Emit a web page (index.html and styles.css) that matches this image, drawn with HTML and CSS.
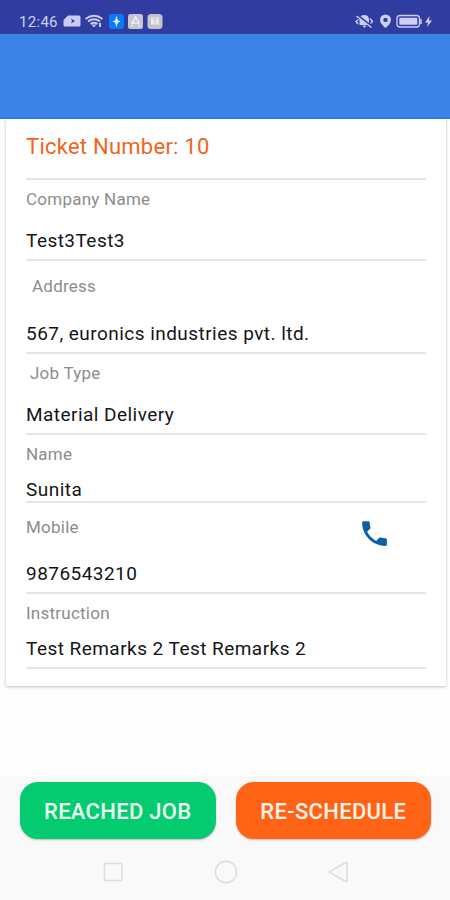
FILE: index.html
```
<!DOCTYPE html>
<html lang="en">
<head>
<meta charset="utf-8">
<title>Ticket details</title>
<link rel="stylesheet" href="styles.css">
</head>
<body>
<header class="status">
  <span class="time">12:46</span>
  <svg class="left-icons" width="104" height="18" viewBox="0 0 104 18">
    <path fill="#c9cdf2" fill-rule="evenodd" d="M5 3.500h11q1.500 0 1.500 1.500v8q0 1.500-1.500 1.500H2Q.5 14.500.5 13V8zM8 6.500l1 2.500-1 2.500 4-2.500z"/>
    <g fill="none" stroke="#c9cdf2" stroke-width="1.800"><path d="M22.500 7Q31 .5 39.500 7M25 9.500q6-4.500 12 0M27.500 12q3.500-2.500 7 0"/></g>
    <path fill="#c9cdf2" d="M28.500 12.500h5L31 15.500zM36 11h2v4h-2z"/>
    <rect x="46" y="2" width="15" height="15" rx="2.500" fill="#087bf5"/>
    <path d="M53.500 4.500v10M50 9.500h7" stroke="#d5edff" stroke-width="1.200"/>
    <path d="M53.500 5.500l2.500 4-2.500 4-2.500-4z" fill="#d5edff"/>
    <rect x="65" y="2" width="15" height="15" rx="2.500" fill="#c4c5d0"/>
    <path d="M69 11l3.500-6 3.500 6zM68 13.500h2M75 13.500h2" fill="none" stroke="#eeeef2" stroke-width="1.600"/>
    <rect x="84.500" y="2" width="15" height="15" rx="3.500" fill="#c4c5cc"/>
    <path d="M88 5.500h8v7h-8z" fill="#e9e9ea"/><path d="M90 7h4M92 7v5" stroke="#c9c9cd"/>
  </svg>
  <svg class="right-icons" width="80" height="18" viewBox="0 0 80 18">
    <path fill="#cdd0f2" d="M4.500 13V8q0-5 4.800-5T14 8v5zM7.500 13.500h4l-2 2.500z"/>
    <path d="M2 3l15 12" stroke="#303c9f" stroke-width="2.500"/><path d="M1.500 4l15 11.500" stroke="#cdd0f2" stroke-width="1.500"/>
    <path d="M3.500 7.500L1 9.500l2 2.500M15 6.500l2.500 3-2 2" fill="none" stroke="#cdd0f2" stroke-width="1.400"/>
    <path fill="#cdd0f2" fill-rule="evenodd" d="M30.500 2.500a5.500 5.500 0 0 1 5.500 5.500q0 3.500-5.500 8-5.500-4.500-5.500-8a5.500 5.500 0 0 1 5.500-5.500zm0 3.200a2.200 2.200 0 1 0 0 4.400 2.200 2.200 0 0 0 0-4.400z"/>
    <rect x="42" y="3.500" width="22.500" height="11.500" rx="3" fill="none" stroke="#cdd0f2" stroke-width="1.300"/>
    <rect x="44.300" y="5.800" width="18" height="7" rx="1" fill="#cdd0f2"/><path d="M66 7v5" stroke="#cdd0f2" stroke-width="1.500"/>
    <path fill="#cdd0f2" d="M74.500 4L70 10.500h3L72 15l5-6.500h-3z"/>
  </svg>
</header>
<div class="appbar"></div>
<main class="card">
  <section class="row ticket"><h1>Ticket Number: 10</h1></section>
  <section class="row company"><div class="label">Company Name</div><div class="value">Test3Test3</div></section>
  <section class="row address"><div class="label">Address</div><div class="value">567, euronics industries pvt. ltd.</div></section>
  <section class="row job"><div class="label">Job Type</div><div class="value">Material Delivery</div></section>
  <section class="row name"><div class="label">Name</div><div class="value">Sunita</div></section>
  <section class="row mobile">
    <div><div class="label">Mobile</div><div class="value">9876543210</div></div>
    <svg class="phone" width="33" height="33" viewBox="0 0 24 24"><path fill="#0d5fa5" d="M6.620 10.790c1.440 2.830 3.760 5.140 6.590 6.590l2.200-2.200c.27-.27.67-.36 1.020-.24 1.120.37 2.330.57 3.570.57.55 0 1 .45 1 1V20c0 .55-.45 1-1 1-9.390 0-17-7.610-17-17 0-.55.45-1 1-1h3.500c.55 0 1 .45 1 1 0 1.250.2 2.450.57 3.570.11.35.03.74-.25 1.020z"/></svg>
  </section>
  <section class="row instruction"><div class="label">Instruction</div><div class="value">Test Remarks 2 Test Remarks 2</div></section>
</main>
<footer class="bottom">
  <div class="actions">
    <button class="btn reached">REACHED JOB</button>
    <button class="btn schedule">RE-SCHEDULE</button>
  </div>
  <nav class="nav">
    <svg width="24" height="24" viewBox="0 0 24 24"><rect x="3.500" y="3.500" width="17.500" height="17" rx="1"/></svg>
    <svg width="24" height="24" viewBox="0 0 24 24"><circle cx="12" cy="12" r="10.700"/></svg>
    <svg width="24" height="24" viewBox="0 0 24 24"><path d="M20 2.500q1-.5 1 .7v17.600q0 1.200-1 .7L3.800 12.700q-1-.7 0-1.400z"/></svg>
  </nav>
</footer>
</body>
</html>
```
FILE: styles.css
```
* { box-sizing: border-box; }
body {
  margin: 0;
  height: 900px;
  display: flex;
  flex-direction: column;
  background: #fefefe;
  font-family: Roboto, "Liberation Sans", sans-serif;
  overflow: hidden;
}
.status {
  height: 34px;
  padding: 9px 15px 0 19px;
  display: flex;
  align-items: center;
  background: #303c9f;
}
.time { width: 44px; font-size: 15px; line-height: 18px; padding-top: 1px; font-weight: 400; letter-spacing: 0.3px; color: #cdd1f4; }
.left-icons { margin-top: -1px; }
.right-icons { margin-left: auto; margin-top: -1px; }
.appbar { height: 85px; background: #3b83e5; border-bottom: 2px solid #2b7be0; }
.card {
  margin: 0 4px 0 6px;
  height: 567px;
  padding: 0 20px;
  background: #fff;
  box-shadow: 0 1px 3px rgba(0, 0, 0, 0.25);
  clip-path: inset(0 -4px -6px -4px);
}
.row { border-bottom: 2px solid #e4e4e4; }
h1 { margin: 0; font-size: 22px; line-height: 26px; font-weight: 400; letter-spacing: 0.25px; color: #f0641e; }
.label { font-size: 17px; line-height: 20px; letter-spacing: 0.24px; color: #8c8c8c; }
.value { font-size: 19px; line-height: 22px; letter-spacing: 0.46px; color: #151515; }
.ticket { height: 61px; padding-top: 15px; }
.company { height: 81px; padding-top: 9px; }
.company .value { margin-top: 21px; }
.address { height: 93px; padding-top: 15px; }
.address .label { padding-left: 6px; }
.address .value { margin-top: 27px; }
.job { height: 81px; padding-top: 9px; }
.job .label { padding-left: 4px; }
.job .value { margin-top: 21px; }
.name { height: 68px; padding-top: 9px; }
.name .value { margin-top: 15px; }
.mobile { height: 91px; padding-top: 14px; display: flex; justify-content: space-between; }
.mobile .value { margin-top: 26px; }
.phone { margin: 0 35px 0 0; }
.instruction { height: 75px; padding-top: 9px; }
.instruction .value { margin-top: 15px; }
.bottom { margin-top: auto; height: 124px; background: #f9f9f9; }
.actions { display: flex; gap: 20px; padding: 6px 19px 0 20px; }
.btn {
  flex: 1;
  height: 57px;
  padding: 2px 0 0;
  border: 0;
  border-radius: 18px;
  font: 500 22px/55px Roboto, "Liberation Sans", sans-serif;
  letter-spacing: 0.3px;
  color: #fff;
  box-shadow: 0 1px 2px rgba(0, 0, 0, 0.25);
}
.reached { background: #04ca70; color: #e8fff2; }
.schedule { background: #ff6316; color: #fff3e8; }
.nav { display: flex; justify-content: space-between; padding: 21px 100px 0 101px; }
.nav svg { fill: none; stroke: #dcdcdc; stroke-width: 1.500; }
```
